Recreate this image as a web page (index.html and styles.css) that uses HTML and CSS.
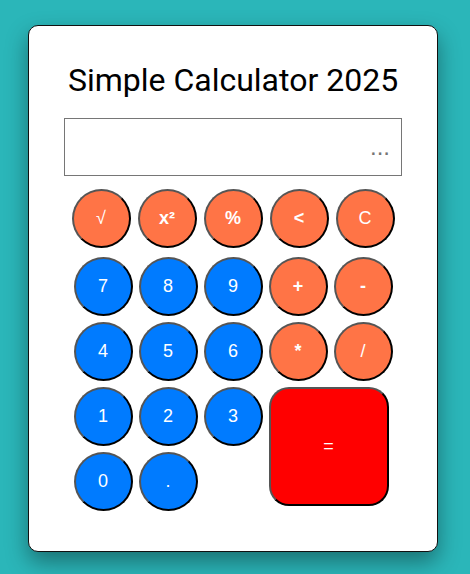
FILE: index.html
```html
<!DOCTYPE html>
<html lang="en">
<head>
<meta charset="utf-8">
<title>Simple Calculator 2025</title>
<link rel="stylesheet" href="styles.css">
</head>
<body>
<div class="card">
  <h1 class="title">Simple Calculator 2025</h1>
  <input class="display" type="text" placeholder="...">
  <div class="top-row">
    <button class="key op">√</button>
    <button class="key op bold">x²</button>
    <button class="key op bold">%</button>
    <button class="key op bold">&lt;</button>
    <button class="key op">C</button>
  </div>
  <div class="keys">
    <button class="key num">7</button>
    <button class="key num">8</button>
    <button class="key num">9</button>
    <button class="key op bold">+</button>
    <button class="key op bold">-</button>
    <button class="key num">4</button>
    <button class="key num">5</button>
    <button class="key num">6</button>
    <button class="key op bold">*</button>
    <button class="key op">/</button>
    <button class="key num">1</button>
    <button class="key num">2</button>
    <button class="key num">3</button>
    <button class="key equals">=</button>
    <button class="key num">0</button>
    <button class="key num">.</button>
  </div>
</div>
</body>
</html>
```
FILE: styles.css
```css
html, body {
  margin: 0;
  padding: 0;
}
body {
  background: #2bb6b9;
  height: 574px;
  overflow: hidden;
  display: flex;
  align-items: flex-start;
  padding: 25px 0 0 28px;
  box-sizing: border-box;
}
.card {
  box-sizing: border-box;
  width: 410px;
  height: 527px;
  background: #fff;
  border: 1px solid #111;
  border-radius: 10px;
  box-shadow: 0 10px 22px rgba(0, 0, 0, 0.38);
  display: flex;
  flex-direction: column;
  align-items: center;
}
.title {
  margin: 36px 0 18px;
  font-family: Roboto, "Liberation Sans", sans-serif;
  font-size: 32px;
  font-weight: 400;
  color: #000;
  line-height: 37.5px;
  text-align: center;
}
.display {
  box-sizing: border-box;
  width: 338px;
  height: 58px;
  margin: 0;
  border: 1px solid #767676;
  border-radius: 0;
  padding: 0 11px 0 10px;
  font-family: "Liberation Sans", Arial, sans-serif;
  font-size: 24px;
  text-align: right;
  outline: none;
}
.display::placeholder {
  color: #757575;
}
.top-row {
  display: flex;
  gap: 7px;
  margin-top: 13px;
}
.keys {
  display: grid;
  grid-template-columns: repeat(5, 59px);
  grid-auto-rows: 59px;
  column-gap: 6px;
  row-gap: 6px;
  margin-top: 9px;
}
.key {
  box-sizing: border-box;
  width: 59px;
  height: 59px;
  margin: 0;
  padding: 0;
  border: 2px solid;
  border-color: #555 #000 #000 #555;
  border-radius: 50%;
  color: #fff;
  font-family: "Liberation Sans", Arial, sans-serif;
  font-size: 18px;
  font-weight: 400;
  display: flex;
  align-items: center;
  justify-content: center;
}
.key.bold {
  font-weight: 700;
}
.op {
  background: #ff7446;
}
.num {
  background: #007bff;
}
.equals {
  grid-column: 4 / span 2;
  grid-row: 3 / span 2;
  width: 120px;
  height: 119px;
  border-radius: 20px;
  background: #ff0000;
}
```
